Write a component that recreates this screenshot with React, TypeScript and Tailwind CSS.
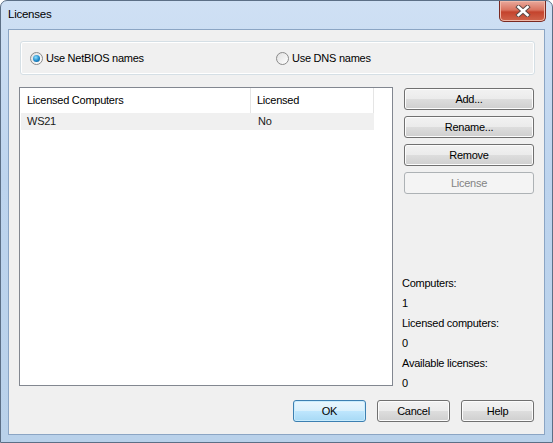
import React from "react";

const font = { fontFamily: '"Liberation Sans", Arial, sans-serif' };

function Win7Button({
  children,
  disabled,
  primary,
  className = "",
}: {
  children: React.ReactNode;
  disabled?: boolean;
  primary?: boolean;
  className?: string;
}) {
  if (disabled) {
    return (
      <button
        disabled
        className={`h-[22px] rounded-[3px] border border-[#adb2b5] bg-[#f4f4f4] text-[#838383] ${className}`}
      >
        {children}
      </button>
    );
  }
  if (primary) {
    return (
      <button
        className={`h-[22px] rounded-[3px] border border-[#3c7fb1] bg-[linear-gradient(to_bottom,#eaf6fd_0%,#d9f0fc_50%,#bee6fd_51%,#a7d9f5_100%)] text-black shadow-[inset_0_0_0_1px_#c9ecfd] ${className}`}
      >
        {children}
      </button>
    );
  }
  return (
    <button
      className={`h-[22px] rounded-[3px] border border-[#707070] bg-[linear-gradient(to_bottom,#f2f2f2_0%,#ebebeb_50%,#dddddd_51%,#cfcfcf_100%)] text-black shadow-[inset_0_0_0_1px_#fcfcfc] ${className}`}
    >
      {children}
    </button>
  );
}

function Radio({ checked, label }: { checked?: boolean; label: string }) {
  return (
    <label className="flex items-center gap-[3px]">
      <span className="flex h-[13px] w-[13px] items-center justify-center rounded-full border border-[#8a8a8a] bg-[linear-gradient(135deg,#e0e0e0,#ffffff)]">
        {checked && (
          <span className="h-[7px] w-[7px] rounded-full bg-[radial-gradient(circle_at_40%_35%,#8fe0ff_0%,#1e88c8_55%,#0b4f86_100%)]" />
        )}
      </span>
      <span>{label}</span>
    </label>
  );
}

export default function App() {
  return (
    <div
      style={font}
      className="relative h-[443px] w-[553px] overflow-hidden rounded-t-[7px] border border-[#5c6f86] bg-[linear-gradient(to_bottom,#cfe0f4_0%,#bdd4ee_40%,#b9d1ea_100%)] text-[11px] tracking-[-0.25px] text-black"
    >
      {/* Title bar */}
      <div className="flex h-[28px] items-center justify-between pl-[7px]">
        <span className="text-[11.5px]">Licenses</span>
        <div className="mr-[6px] -mt-[8px] flex h-[21px] w-[47px] items-center justify-center rounded-b-[5px] border border-t-0 border-[#7a2a22] bg-[linear-gradient(to_bottom,#e9a99c_0%,#d9735f_45%,#c4432d_55%,#d0654c_100%)] shadow-[inset_0_0_0_1px_#f0b8a8]">
          <svg width="16" height="12" viewBox="0 0 16 12">
            <path d="M3.5 2 L12.5 10 M12.5 2 L3.5 10" stroke="#5b4a48" strokeWidth="4.4" strokeLinecap="square" />
            <path d="M3.5 2 L12.5 10 M12.5 2 L3.5 10" stroke="#ffffff" strokeWidth="2.6" strokeLinecap="square" />
          </svg>
        </div>
      </div>

      {/* Client area */}
      <div className="mx-[7px] flex h-[406px] flex-col border border-[#8ba5c4] bg-[#f0f0f0] pl-[10px] pr-[9px] pt-[11px]">
        {/* Name mode group */}
        <div className="ml-[1px] flex h-[34px] items-center rounded-[3px] border border-[#d5dfe5] pl-[9px] shadow-[inset_0_0_0_1px_#ffffff]">
          <div className="w-[246px]">
            <Radio checked label="Use NetBIOS names" />
          </div>
          <Radio label="Use DNS names" />
        </div>

        {/* List + side panel */}
        <div className="mt-[12px] flex h-[303px] gap-[11px]">
          <div className="h-[299px] w-[374px] border border-[#828790] bg-white">
            <div className="flex h-[25px] items-center">
              <div className="flex h-full w-[231px] items-center border-r border-[#e5e5e5] pl-[7px]">
                Licensed Computers
              </div>
              <div className="flex h-full w-[123px] items-center border-r border-[#e5e5e5] pl-[6px]">
                Licensed
              </div>
            </div>
            <div className="ml-[1px] flex h-[17px] w-[353px] items-center bg-[#f0f0f0] text-[#1a1a1a]">
              <div className="w-[230px] pl-[6px]">WS21</div>
              <div className="pl-[7px]">No</div>
            </div>
          </div>

          <div className="flex w-[130px] flex-col">
            <div className="flex flex-col gap-[6px] pt-[1px]">
              <Win7Button>Add...</Win7Button>
              <Win7Button>Rename...</Win7Button>
              <Win7Button>Remove</Win7Button>
              <Win7Button disabled>License</Win7Button>
            </div>
            <div className="-mb-[3px] -ml-[2px] mt-auto flex flex-col leading-[20px]">
              <span>Computers:</span>
              <span>1</span>
              <span>Licensed computers:</span>
              <span>0</span>
              <span>Available licenses:</span>
              <span>0</span>
            </div>
          </div>
        </div>

        {/* Dialog buttons */}
        <div className="mt-[10px] flex justify-end gap-[11px] pr-[1px]">
          <Win7Button primary className="w-[73px]">OK</Win7Button>
          <Win7Button className="w-[73px]">Cancel</Win7Button>
          <Win7Button className="w-[73px]">Help</Win7Button>
        </div>
      </div>
    </div>
  );
}
